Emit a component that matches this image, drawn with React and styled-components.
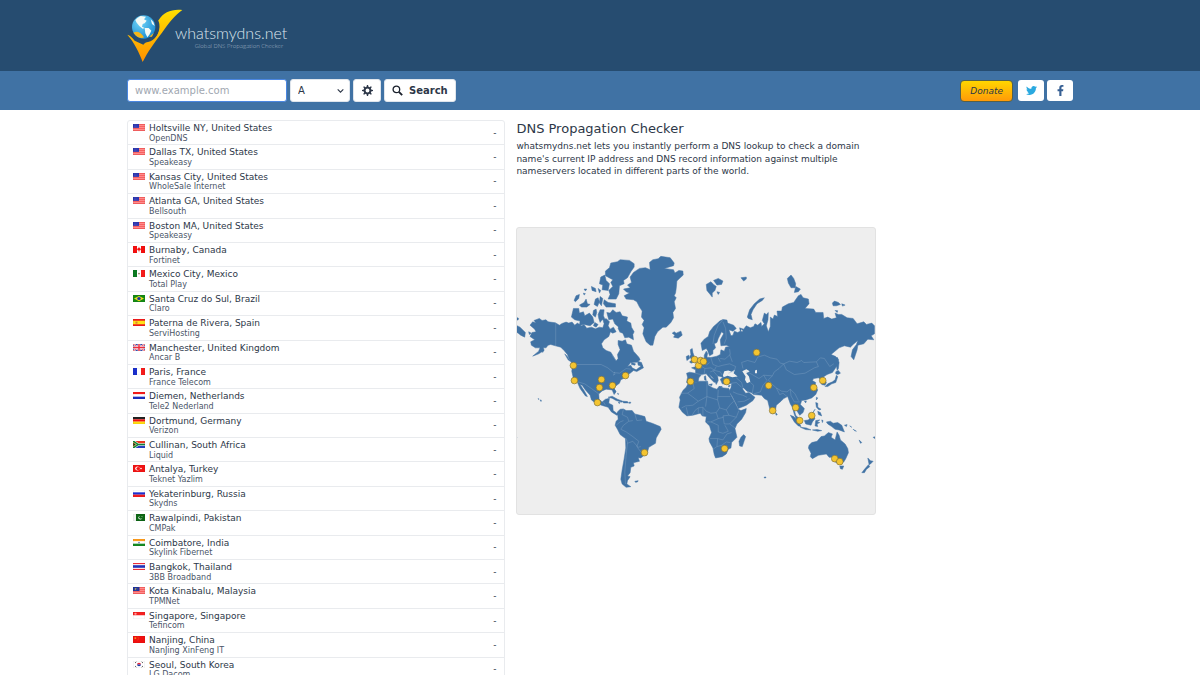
import styled, { createGlobalStyle } from 'styled-components';
import { FaFacebookF, FaTwitter } from 'react-icons/fa';

const GlobalStyle = createGlobalStyle`
  * {
    box-sizing: border-box;
  }

  body {
    margin: 0;
    background-color: white;
    color: #2d3748;
    font-family: 'DejaVu Sans', sans-serif;
    font-size: 9px;
  }

  button, input, select {
    font-family: inherit;
    color: inherit;
  }

  h1, p, ul {
    margin: 0;
    padding: 0;
  }
`;

const Container = styled.div`
  width: 100%;
  max-width: 962px;
  margin: 0 auto;
  padding: 0 8px;
`;

const Header = styled.header`
  padding: 8px 0;
  background-color: #264c70;
`;

const Brand = styled.a`
  display: inline-flex;
  align-items: center;
  vertical-align: top;

  color: #dbe4ec;
  text-decoration: none;

  svg {
    width: 56px;
    height: 55px;
    flex-shrink: 0;
  }
`;

const BrandText = styled.span`
  display: flex;
  flex-direction: column;
  align-items: flex-end;
  margin-left: -8px;
  padding-top: 2px;

  font-family: Lato, sans-serif;
  font-weight: 300;

  .brand__name {
    font-size: 16px;
    line-height: 18px;
  }

  .brand__tagline {
    padding-right: 4px;

    color: #a3b5c6;
    font-family: 'Open Sans', sans-serif;
    font-size: 6px;
    line-height: 8px;
  }
`;

const Toolbar = styled.div`
  padding: 8px 0;
  background-color: #4072a4;

  ${Container} {
    display: flex;
    justify-content: space-between;
    align-items: center;
  }
`;

const SearchForm = styled.form`
  display: flex;
  column-gap: 3px;
`;

const DomainInput = styled.input`
  width: 160px;
  height: 23px;
  border: 1px solid #4a86e0;
  border-radius: 3px;
  padding: 0 7px;
  outline: none;

  background-color: white;
  font-size: 10px;

  &::placeholder {
    color: #a0a7b1;
    opacity: 1;
  }
`;

const SelectWrap = styled.label`
  display: grid;
  align-items: center;

  select,
  svg {
    grid-area: 1 / 1;
  }

  svg {
    width: 9px;
    height: 9px;
    margin-right: 5px;
    justify-self: end;
    pointer-events: none;
  }
`;

const TypeSelect = styled.select`
  width: 60px;
  height: 23px;
  border: 1px solid #dfe5ec;
  border-radius: 3px;
  padding: 0 7px;

  appearance: none;
  background-color: white;
  font-size: 10px;
`;

const Button = styled.button`
  min-width: 28px;
  height: 23px;

  display: flex;
  justify-content: center;
  align-items: center;
  column-gap: 6px;
  border: 1px solid #dfe5ec;
  border-radius: 3px;
  padding: 0 7px;

  background-color: white;
  font-size: 10px;
  font-weight: 700;
  cursor: pointer;

  svg {
    width: 11px;
    height: 11px;
    flex-shrink: 0;
  }
`;

const Social = styled.div`
  display: flex;
  align-items: center;
  column-gap: 3px;
`;

const DonateButton = styled.button`
  height: 22px;
  margin-right: 2px;
  border: 1px solid #54604c;
  border-radius: 4px;
  padding: 0 9px;

  background: linear-gradient(#ffd600, #ff9a08);
  font-size: 9px;
  font-style: italic;
  line-height: 18px;
  cursor: pointer;
`;

const SocialLink = styled.a`
  width: 26px;
  height: 21px;

  display: flex;
  justify-content: center;
  align-items: center;
  border-radius: 3px;

  background-color: white;
  color: ${({ $color }) => $color};
  font-size: 11px;
`;

const Main = styled.main`
  display: grid;
  grid-template-columns: 40% 38% 1fr;
  column-gap: 11px;
  align-items: start;
  padding-top: 10px;
`;

const ServerList = styled.ul`
  border: 1px solid #e9ebee;
  border-radius: 3px;
  list-style: none;
`;

const ServerRow = styled.li`
  display: flex;
  align-items: flex-start;
  border-bottom: 1px solid #e9ebee;
  padding: 1px 8px 1px 5px;

  &:last-child {
    border-bottom: 0;
  }

  svg {
    width: 12px;
    height: 7px;
    margin-top: 2px;
    flex-shrink: 0;
  }
`;

const ServerText = styled.div`
  flex-grow: 1;
  padding-left: 4px;

  .server__name {
    font-size: 9px;
    line-height: 1.4;
  }

  .server__provider {
    color: #4a5568;
    font-size: 8px;
    line-height: 1.1;
  }
`;

const Result = styled.span`
  align-self: center;
  font-size: 9px;
`;

const Intro = styled.section`
  padding-top: 1px;

  h1 {
    font-size: 13px;
    font-weight: 400;
    line-height: 16px;
  }

  p {
    margin-top: 3px;

    font-size: 9px;
    line-height: 1.4;
  }
`;

const MapFrame = styled.div`
  margin-top: 49px;
  border: 1px solid #e2e2e2;
  border-radius: 3px;
  overflow: hidden;

  background-color: #eee;

  svg {
    display: block;
    width: 100%;
  }
`;

const stripesH = (...colors) =>
  colors.map((c, i) => (
    <rect key={i} y={(8 / colors.length) * i} width="12" height={8 / colors.length} fill={c} />
  ));

const stripesV = (...colors) =>
  colors.map((c, i) => <rect key={i} x={4 * i} width="4" height="8" fill={c} />);

const redStripes = (
  <>
    <rect width="12" height="8" fill="#ff8f8f" />
    <path d="M0 .5H12M0 2.8H12M0 5.1H12M0 7.4H12" stroke="#f65c5c" />
  </>
);

const flags = {
  us: (
    <>
      {redStripes}
      <rect width="6" height="4.4" fill="#2b35b0" />
      <path d="M1 1.2H5M1 3H5" stroke="#7a80d4" strokeWidth=".5" strokeDasharray=".6 .7" />
    </>
  ),
  ca: (
    <>
      {stripesV('#f50f0f', '#fff', '#f50f0f')}
      <path d="M6 1.2 7.2 3l1-.2-.8 2L6.3 5.2v1.4h-.6V5.2l-1.1-.4-.8-2 1 .2z" fill="#f50f0f" />
    </>
  ),
  mx: (
    <>
      {stripesV('#0b7a20', '#fff', '#f51b1b')}
      <circle cx="6" cy="4" r="1" fill="#9b8a6a" />
    </>
  ),
  br: (
    <>
      <rect width="12" height="8" fill="#148a14" />
      <path d="M6 1 11 4 6 7 1 4z" fill="#f2e01c" />
      <circle cx="6" cy="4" r="1.8" fill="#1c3ba0" />
    </>
  ),
  es: (
    <>
      <rect width="12" height="8" fill="#f21b1b" />
      <rect y="2" width="12" height="4" fill="#ffe119" />
      <rect x="2.5" y="3" width="2" height="2.2" fill="#d98034" />
    </>
  ),
  gb: (
    <>
      <rect width="12" height="8" fill="#2c3fa8" />
      <path d="M0 0 12 8M12 0 0 8" stroke="#fff" strokeWidth="2" />
      <path d="M0 0 12 8M12 0 0 8" stroke="#ee2c3c" strokeWidth=".8" />
      <path d="M6 0V8M0 4H12" stroke="#fff" strokeWidth="2.6" />
      <path d="M6 0V8M0 4H12" stroke="#ee2c3c" strokeWidth="1.5" />
    </>
  ),
  fr: stripesV('#1a2fcc', '#fff', '#f51b1b'),
  nl: stripesH('#f51b1b', '#fff', '#1a2fbf'),
  de: stripesH('#222', '#f21010', '#ffdc10'),
  za: (
    <>
      {stripesH('#f03a22', '#2740c4')}
      <path d="M0 0 5 4 0 8M5 4H12" fill="none" stroke="#fff" strokeWidth="3" />
      <path d="M0 0 5 4 0 8M5 4H12" fill="none" stroke="#12843a" strokeWidth="1.8" />
      <path d="M0 1.5 3 4 0 6.5z" fill="#222" stroke="#e8c51b" strokeWidth=".5" />
    </>
  ),
  tr: (
    <>
      <rect width="12" height="8" fill="#f21414" />
      <circle cx="4.5" cy="4" r="2.3" fill="#fff" />
      <circle cx="5.2" cy="4" r="1.8" fill="#f21414" />
      <circle cx="8" cy="4" r=".8" fill="#fff" />
    </>
  ),
  ru: stripesH('#fff', '#1c2fd0', '#f21b1b'),
  pk: (
    <>
      <rect width="12" height="8" fill="#0c6614" />
      <rect width="3" height="8" fill="#f1f3f1" />
      <circle cx="7.3" cy="4.2" r="2" fill="#fff" />
      <circle cx="7.9" cy="3.7" r="1.8" fill="#0c6614" />
      <circle cx="9" cy="3" r=".5" fill="#fff" />
    </>
  ),
  in: (
    <>
      {stripesH('#ff9d1c', '#fff', '#148a22')}
      <circle cx="6" cy="4" r="1" fill="#7f86c4" />
    </>
  ),
  th: (
    <>
      <rect width="12" height="8" fill="#f2303c" />
      <rect y="1.3" width="12" height="5.4" fill="#fff" />
      <rect y="2.5" width="12" height="3" fill="#2233b8" />
    </>
  ),
  my: (
    <>
      {redStripes}
      <rect width="6.5" height="4.6" fill="#20349c" />
      <circle cx="3" cy="2.3" r="1.3" fill="#d9c344" />
      <circle cx="3.5" cy="2.3" r="1" fill="#20349c" />
    </>
  ),
  sg: (
    <>
      {stripesH('#f52020', '#fff')}
      <circle cx="2.5" cy="2" r="1.2" fill="#ff9c9c" />
    </>
  ),
  cn: (
    <>
      <rect width="12" height="8" fill="#f01010" />
      <circle cx="2.3" cy="2.3" r="1" fill="#f7a01c" />
      <path d="M4.5 1h.6M5.3 2.2h.6M5.3 3.5h.6M4.5 4.6h.6" stroke="#f7a01c" strokeWidth=".5" />
    </>
  ),
  kr: (
    <>
      <rect width="12" height="8" fill="#fff" />
      <path d="M4 4a2 2 0 0 1 4 0z" fill="#ee2233" />
      <path d="M4 4a2 2 0 0 0 4 0z" fill="#1c3da8" />
      <path
        d="M2 2.3 3.3 1M8.7 1 10 2.3M2 5.7 3.3 7M8.7 7 10 5.7"
        stroke="#444"
        strokeWidth=".9"
      />
    </>
  ),
};

const servers = [
  ['us', 'Holtsville NY, United States', 'OpenDNS'],
  ['us', 'Dallas TX, United States', 'Speakeasy'],
  ['us', 'Kansas City, United States', 'WholeSale Internet'],
  ['us', 'Atlanta GA, United States', 'Bellsouth'],
  ['us', 'Boston MA, United States', 'Speakeasy'],
  ['ca', 'Burnaby, Canada', 'Fortinet'],
  ['mx', 'Mexico City, Mexico', 'Total Play'],
  ['br', 'Santa Cruz do Sul, Brazil', 'Claro'],
  ['es', 'Paterna de Rivera, Spain', 'ServiHosting'],
  ['gb', 'Manchester, United Kingdom', 'Ancar B'],
  ['fr', 'Paris, France', 'France Telecom'],
  ['nl', 'Diemen, Netherlands', 'Tele2 Nederland'],
  ['de', 'Dortmund, Germany', 'Verizon'],
  ['za', 'Cullinan, South Africa', 'Liquid'],
  ['tr', 'Antalya, Turkey', 'Teknet Yazlim'],
  ['ru', 'Yekaterinburg, Russia', 'Skydns'],
  ['pk', 'Rawalpindi, Pakistan', 'CMPak'],
  ['in', 'Coimbatore, India', 'Skylink Fibernet'],
  ['th', 'Bangkok, Thailand', '3BB Broadband'],
  ['my', 'Kota Kinabalu, Malaysia', 'TPMNet'],
  ['sg', 'Singapore, Singapore', 'Tefincom'],
  ['cn', 'Nanjing, China', 'NanJing XinFeng IT'],
  ['kr', 'Seoul, South Korea', 'LG Dacom'],
];

const land = [
  // north and central america
  'M42 300 50 290 60 294 54 286 70 280 78 286 90 284 96 290 118 293 130 300 138 295 150 291 158 294 168 291 176 300 184 294 196 302 204 299 212 309 226 306 238 311 250 306 260 308 264 296 261 286 270 280 280 290 276 302 282 312 292 306 300 320 290 324 283 320 278 334 264 344 256 356 260 368 270 376 284 381 292 394 300 407 306 400 304 388 312 374 306 358 306 346 318 348 328 344 332 356 346 360 352 378 368 396 372 404 362 411 344 412 334 424 344 420 348 428 360 434 378 420 382 428 362 439 352 436 340 446 330 450 326 458 314 464 310 474 294 486 298 502 294 508 288 494 270 492 258 497 248 506 249 522 258 530 268 522 280 519 278 534 290 540 291 556 302 564 310 560 312 566 302 570 286 560 276 546 256 540 236 532 226 524 222 510 208 494 198 480 192 478 204 496 214 514 208 512 192 490 184 472 172 460 167 438 170 418 160 404 154 388 144 376 134 366 118 362 104 358 96 360 90 368 82 368 84 376 68 386 50 393 68 378 72 368 58 368 46 360 44 350 56 344 42 334 48 322 60 320 56 312z',
  'M0 300 12 306 28 322 26 336 14 330 4 322 0 328zM0 276 8 280 6 285 0 284zM38 320 46 324 40 328zM78 376 84 374 80 382zM146 386 154 394 162 408 156 404z',
  // south america
  'M304 560 312 552 322 551 330 556 348 556 356 566 372 570 386 574 390 588 408 594 432 604 435 612 426 628 420 638 418 654 408 660 398 666 394 680 384 690 374 698 366 697 370 708 352 712 354 722 344 726 342 742 334 752 342 754 334 766 332 776 344 784 330 786 318 776 314 762 318 734 324 700 329 668 328 640 312 628 304 612 297 600 300 588 306 582zM356 768 366 766 364 770 358 771z',
  // greenland and iceland
  'M322 192 342 188 334 180 346 172 342 156 352 142 370 130 388 128 402 134 400 112 410 104 426 101 434 94 462 98 474 114 472 122 444 130 472 134 476 144 488 136 500 138 501 150 488 162 482 168 480 190 478 204 474 212 480 218 474 230 478 250 470 262 472 278 464 292 450 306 440 306 424 320 416 334 410 360 402 360 390 350 380 326 384 308 378 298 384 286 376 276 378 258 370 246 362 230 352 224 330 222 324 212 340 204 330 200z',
  'M468 324 474 320 480 324 494 318 498 330 486 339 472 336 476 330z',
  // canadian arctic
  'M268 138 280 128 284 114 304 110 312 104 340 106 354 116 354 126 344 140 334 158 322 166 324 176 310 182 308 206 300 222 276 222 282 208 278 196 290 184 284 172 290 164 268 152zM254 156 266 150 270 166 280 176 276 196 258 194 260 180 250 176z',
  'M166 276 172 250 188 250 190 264 202 260 206 272 220 264 230 276 234 292 222 302 204 298 190 300 192 288 176 284zM272 262 282 264 290 254 300 262 312 260 318 272 334 276 332 288 344 294 346 306 354 320 350 328 352 344 338 336 326 338 320 324 314 322 308 306 296 296 290 282 278 284zM246 268 252 254 264 254 262 272 268 286 258 284 252 292 248 280z',
  'M174 226 180 212 190 208 188 220 178 230zM190 240 204 232 210 222 214 236 222 238 212 246 196 246zM226 184 238 190 240 200 228 196zM238 222 246 218 250 230 244 244 234 238zM264 224 276 232 298 236 298 246 270 246 262 236zM232 256 240 252 242 262 238 276 230 270zM204 192 212 192 208 198zM202 204 208 206 204 210zM246 190 254 196 250 204zM236 292 246 298 240 306 232 302zM310 298 318 312 312 322 306 310zM252 214 260 220 256 242 250 234zM346 412 358 416 356 420 346 418zM364 408 376 412 380 424 366 420z',
  // caribbean and hawaii
  'M276 516 288 513 304 522 320 528 318 531 300 526 288 519zM320 528 334 529 336 533 322 533zM338 531 344 531 343 534 338 534zM306 532 312 532 310 535zM294 492 300 498 298 502zM304 504 308 506 306 508zM72 524 76 525 75 529zM66 520 69 521 68 523zM0 635 3 636 2 638 0 638z',
  // europe and asia
  'M511 444 520 441 538 444 538 434 526 428 540 424 548 418 556 408 564 402 564 390 570 378 574 384 572 396 584 397 602 393 612 388 614 374 624 378 628 366 640 364 630 360 614 362 612 344 622 326 616 320 606 340 602 352 594 356 598 368 590 376 590 386 580 392 574 376 570 370 558 376 554 354 564 342 576 334 580 320 592 304 604 294 610 288 620 283 632 285 634 294 652 300 660 310 650 318 638 314 644 332 650 330 654 318 664 322 672 318 670 308 682 312 690 302 702 308 712 304 716 296 724 300 734 292 736 304 744 296 738 286 744 264 750 268 756 262 755 284 750 302 756 320 762 304 762 276 770 282 774 270 784 274 782 258 796 258 798 246 816 236 832 232 846 212 854 208 860 218 876 222 878 236 866 250 892 252 898 262 920 262 922 280 934 276 946 282 960 278 956 264 966 268 976 268 992 278 1010 280 1022 296 1042 290 1050 298 1066 294 1074 302 1074 326 1064 332 1072 344 1054 342 1042 356 1024 360 1026 350 1022 374 1012 404 1004 394 1008 374 1020 358 1024 346 1010 358 1002 366 984 362 968 368 944 388 958 394 966 402 962 422 948 442 932 448 920 456 930 472 926 480 916 478 914 464 906 458 892 460 888 466 898 472 896 480 904 494 898 508 886 518 868 524 856 526 852 538 864 550 860 562 850 570 840 554 834 556 838 570 848 580 850 594 842 588 834 568 828 546 822 536 814 514 802 520 794 528 780 540 776 562 770 566 760 550 754 526 744 520 736 510 712 508 704 502 692 498 682 488 678 490 688 504 698 502 716 516 710 526 690 540 666 550 660 536 648 514 638 498 644 488 646 474 634 478 618 476 612 462 620 456 604 452 606 466 600 478 592 460 578 446 586 458 600 466 594 472 582 460 570 446 556 448 548 458 546 470 532 474 522 478 511 472 514 456z',
  // british isles
  'M522 374 528 370 530 382 534 394 540 404 538 410 524 414 520 410 528 404 520 396 524 388zM510 394 518 390 520 400 512 406zM578 478 588 476 586 482zM564 454 568 452 570 466 565 464zM608 484 618 484 614 487zM636 482 642 480 638 486z',
  // africa
  'M516 474 530 474 550 468 574 468 576 480 590 488 602 492 608 484 622 488 638 490 642 506 654 528 666 552 674 556 690 550 688 562 676 582 662 596 656 610 662 636 646 652 644 668 636 672 630 686 618 694 598 698 594 688 590 668 580 650 578 640 586 622 580 602 568 590 570 574 558 572 552 564 530 570 512 572 498 560 488 546 492 524 490 516 500 496 510 486zM682 628 688 634 684 646 678 664 670 662 668 648 674 636z',
  // arctic russia and svalbard
  'M570 178 584 170 592 178 600 184 596 196 588 204 588 216 580 206 572 196zM592 166 606 160 620 168 616 178 602 180zM602 200 610 202 606 208zM674 158 690 156 690 162 682 168zM693 276 700 254 714 236 730 222 744 218 738 226 722 236 710 254 704 268 708 284 696 280zM813 160 824 150 832 160 838 176 836 188 824 188 816 174zM838 184 852 192 846 200 834 202zM948 234 954 228 966 232 972 238 960 242 950 242zM976 236 986 240 978 243zM956 256 964 257 962 262z',
  // pacific asia
  'M962 396 968 412 966 430 962 436 960 418zM958 440 966 436 972 444 964 448 958 446zM960 450 964 454 958 472 946 476 934 484 926 484 934 476 948 470 956 464zM898 532 904 534 904 546 914 552 908 554 900 546zM904 558 912 562 916 572 906 568zM896 552 890 562 888 564zM900 516 904 518 900 524zM864 528 870 527 868 533z',
  'M822 570 832 574 846 588 854 604 846 602 834 590zM852 606 870 608 884 614 868 613zM864 586 876 584 886 572 896 580 888 590 884 600 868 596zM898 586 910 584 902 590 910 592 902 596 904 604 896 602zM888 614 902 613 916 616 904 618zM916 584 920 586 918 592zM930 590 942 588 950 594 964 592 976 600 984 620 968 614 956 612 946 604 934 596zM984 600 992 598 990 604zM1000 602 1006 606zM1010 612 1020 618 1014 616zM1028 644 1036 652 1032 654zM1070 636 1077 634 1074 640zM778 562 783 568 779 570z',
  // australia and new zealand
  'M878 660 886 652 902 648 914 634 924 632 936 622 948 626 944 636 956 644 962 620 968 630 972 644 986 656 994 670 996 682 988 700 982 710 970 716 956 710 948 696 938 696 930 686 906 690 888 700 882 694 884 684 876 668zM970 722 982 722 978 732 972 730zM1054 698 1062 706 1070 708 1062 716 1058 718zM1056 718 1060 724 1050 732 1044 742 1036 742 1044 732zM744 755 749 755 748 758 744 758z',
];

const borders = [
  'M119 294V362M168 418H255L275 428 292 442 310 444 330 430 344 432M178 468 206 476 226 490 248 506M288 390 300 407M262 530 268 540M296 440 292 450 298 446',
  'M322 552 318 568 334 576 338 588 322 600 314 612 330 620 350 634 368 648 362 664 374 680M330 640 334 652 330 690 326 740 328 776M356 566 362 586 378 584M334 654 350 648 366 666 374 664M338 588 350 586M300 600 312 590 322 586',
  'M620 284 606 300 594 330 590 356M620 290 628 310 630 340 624 356M584 398 590 418 606 424 620 420 640 416 658 424 654 438 636 444M606 398 612 410M612 400 626 402 642 388 640 372M548 418 566 430 564 446M566 430 584 428 596 436 612 440 618 450M580 412 570 420M590 436 600 448 606 454M538 444 560 450M640 388 648 410M600 424 594 436 582 440',
  'M680 430 676 412 694 406 716 412 724 396 744 390 762 398 782 402 792 414 802 416M802 416 820 408 842 412 856 406 862 412 900 410 912 398 924 400 940 424 952 416M802 416 810 434 834 448 866 444 894 428 906 424 900 410M802 416 788 430 774 440 768 452 742 450 728 460 704 446 690 440M768 452 756 464 764 474 780 488 796 498 812 500 822 492 836 506 846 526M742 450 752 466 740 480 732 500 712 506M700 470 712 480 708 504M660 458 676 472 680 488M646 474 660 472 676 486M650 500 664 506 680 510 692 516M664 530 684 528 700 520M780 488 790 508 800 504 812 514M822 492 824 512 834 530 850 530',
  'M530 474 534 490 514 504H492M514 504 528 514 546 528 572 514 572 470M572 514 604 524 606 494M604 514H642M604 524 610 548 600 562 584 564 570 558 560 546 546 548 536 556 528 570M546 528 530 540 508 542 496 548M572 514 568 544M610 548 630 554 642 538 652 528M600 562 606 580 584 590 572 590M630 554 638 570 660 576 668 556M660 576 640 596 656 608M640 596H624L620 572 638 570M584 590 606 600 606 620 620 624 636 618 626 600M580 640H604L620 644 632 626 646 622M604 640 602 664 590 672M602 664 616 660 630 650 642 652M616 660 624 670M510 546 516 572M546 548V564M560 546V572M606 580 622 576',
];

const markers = [
  [573, 365], [574, 380], [601, 379], [599, 387], [612, 385], [625, 375], [597, 402],
  [644, 452], [690, 381], [694, 359], [698, 365], [700, 360], [703, 361], [756, 352],
  [726, 381], [724, 448], [768, 385], [772, 410], [795, 407], [799, 420], [811, 415],
  [813, 387], [822, 380], [834, 458], [839, 461],
];

const WorldMap = () => (
  <svg viewBox="3 9 1071 858" role="img" aria-label="Map of DNS servers">
    {land.map((d) => (
      <path key={d} d={d} fill="#4072a4" stroke="#4072a4" strokeWidth="1.5" />
    ))}
    <path
      d="M620 450 624 438 636 436 646 440 656 434 652 444 664 454 648 456 634 452 622 456zM678 438 690 432 700 438 690 444 698 454 702 470 692 474 686 464 688 454zM716 436 722 434 722 444 716 444zM676 312 680 318 674 318z"
      fill="#eee"
    />
    {borders.map((d) => (
      <path key={d} d={d} fill="none" stroke="#86a6c6" strokeOpacity=".75" strokeWidth="1.5" />
    ))}
    {markers.map(([x, y]) => (
      <circle
        key={`${x}-${y}`}
        cx={(x - 516) * 3 + 1}
        cy={(y - 225) * 3 + 1}
        r="10"
        fill="#f4c430"
        stroke="#7d6f3a"
        strokeWidth="2"
      />
    ))}
  </svg>
);

const Logo = () => (
  <svg viewBox="51 24 168 165" aria-hidden="true">
    <defs>
      <linearGradient id="tick" x1="0" y1="0" x2="0" y2="1">
        <stop offset="0" stopColor="#ffe000" />
        <stop offset="1" stopColor="#ff9000" />
      </linearGradient>
      <radialGradient id="sea" cx=".35" cy=".3" r=".8">
        <stop offset="0" stopColor="#6fd4f7" />
        <stop offset="1" stopColor="#1688d0" />
      </radialGradient>
    </defs>
    <path
      d="M52 104C60 106 66 112 74 122L100 134C128 108 134 80 146 60 160 36 188 26 217 30 196 44 176 70 156 98 130 132 114 154 98 186 88 158 72 126 52 104z"
      fill="url(#tick)"
    />
    <path d="M58 94A46 46 0 0 0 146 64L130 60 66 92z" fill="#264c70" />
    <circle cx="101" cy="81" r="35" fill="url(#sea)" />
    <path
      d="M82 54 92 48 108 50 102 58 110 62 104 70 98 72 96 80 104 84 98 86 88 78 80 68 76 60zM104 84 116 84 124 92 118 104 112 112 106 100zM122 58 130 66 134 78 126 72z"
      fill="#f4faf6"
    />
    <path d="M70 98C80 92 92 96 102 112 96 117 82 114 70 98zM118 110 131 99 126 110z" fill="#f8b617" />
    <path d="M62 96A42 42 0 0 0 143 74" fill="none" stroke="#264c70" strokeWidth="5" />
  </svg>
);

const GearIcon = () => (
  <svg viewBox="0 0 20 20" fill="currentColor" aria-hidden="true">
    <path d="M3.94 6.5L2.22 3.64l1.42-1.42L6.5 3.94c.52-.3 1.1-.54 1.7-.7L9 0h2l.8 3.24c.6.16 1.18.4 1.7.7l2.86-1.72 1.42 1.42-1.72 2.86c.3.52.54 1.1.7 1.7L20 9v2l-3.24.8c-.16.6-.4 1.18-.7 1.7l1.72 2.86-1.42 1.42-2.86-1.72c-.52.3-1.1.54-1.7.7L11 20H9l-.8-3.24c-.6-.16-1.18-.4-1.7-.7l-2.86 1.72-1.42-1.42 1.72-2.86c-.3-.52-.54-1.1-.7-1.7L0 11V9l3.24-.8c.16-.6.4-1.18.7-1.7zM10 13.5a3.5 3.5 0 1 0 0-7 3.5 3.5 0 0 0 0 7z" />
  </svg>
);

const SearchIcon = () => (
  <svg viewBox="0 0 20 20" fill="none" stroke="#1a202c" aria-hidden="true">
    <circle cx="8" cy="8" r="6" strokeWidth="2.4" />
    <path d="M12.5 12.5 18.5 18.5" strokeWidth="3.4" />
  </svg>
);

const ChevronIcon = () => (
  <svg viewBox="0 0 8 8" fill="none" stroke="currentColor" aria-hidden="true">
    <path d="M1.5 3 4 5.5 6.5 3" />
  </svg>
);

const Server = ({ country, name, provider }) => (
  <ServerRow>
    <svg viewBox="0 0 12 8" preserveAspectRatio="none" aria-hidden="true">
      {flags[country]}
      <rect x=".25" y=".25" width="11.5" height="7.5" fill="none" stroke="#000" strokeOpacity=".08" strokeWidth=".5" />
    </svg>
    <ServerText>
      <div className="server__name">{name}</div>
      <div className="server__provider">{provider}</div>
    </ServerText>
    <Result>-</Result>
  </ServerRow>
);

const App = () => {
  return (
    <>
      <GlobalStyle />

      <Header>
        <Container>
          <Brand href="/">
            <Logo />
            <BrandText>
              <span className="brand__name">whatsmydns.net</span>
              <span className="brand__tagline">Global DNS Propagation Checker</span>
            </BrandText>
          </Brand>
        </Container>
      </Header>

      <Toolbar>
        <Container>
          <SearchForm onSubmit={(e) => e.preventDefault()}>
            <DomainInput type="text" placeholder="www.example.com" aria-label="Domain name" />
            <SelectWrap>
              <TypeSelect aria-label="Record type" defaultValue="A">
                <option>A</option>
                <option>AAAA</option>
                <option>CNAME</option>
                <option>MX</option>
                <option>NS</option>
                <option>TXT</option>
              </TypeSelect>
              <ChevronIcon />
            </SelectWrap>
            <Button type="button" aria-label="Options">
              <GearIcon />
            </Button>
            <Button type="submit">
              <SearchIcon />
              Search
            </Button>
          </SearchForm>

          <Social>
            <DonateButton type="button">Donate</DonateButton>
            <SocialLink href="#twitter" aria-label="Twitter" $color="#2aa9e0">
              <FaTwitter />
            </SocialLink>
            <SocialLink href="#facebook" aria-label="Facebook" $color="#365f93">
              <FaFacebookF />
            </SocialLink>
          </Social>
        </Container>
      </Toolbar>

      <Container>
        <Main>
          <ServerList>
            {servers.map(([country, name, provider]) => (
              <Server key={name} country={country} name={name} provider={provider} />
            ))}
          </ServerList>

          <Intro>
            <h1>DNS Propagation Checker</h1>
            <p>
              whatsmydns.net lets you instantly perform a DNS lookup to check a domain name's
              current IP address and DNS record information against multiple nameservers located
              in different parts of the world.
            </p>
            <MapFrame>
              <WorldMap />
            </MapFrame>
          </Intro>
        </Main>
      </Container>
    </>
  );
};

export default App;
